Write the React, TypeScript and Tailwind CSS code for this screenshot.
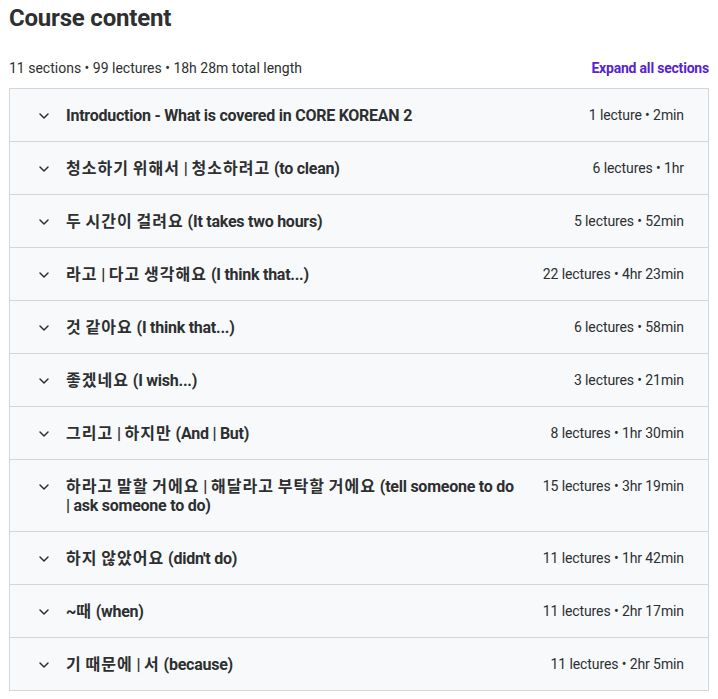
import { ChevronDown } from "lucide-react";

type Section = {
  title: string;
  lectures: number;
  length: string;
};

const sections: Section[] = [
  { title: "Introduction - What is covered in CORE KOREAN 2", lectures: 1, length: "2min" },
  { title: "청소하기 위해서 | 청소하려고 (to clean)", lectures: 6, length: "1hr" },
  { title: "두 시간이 걸려요 (It takes two hours)", lectures: 5, length: "52min" },
  { title: "라고 | 다고 생각해요 (I think that...)", lectures: 22, length: "4hr 23min" },
  { title: "것 같아요 (I think that...)", lectures: 6, length: "58min" },
  { title: "좋겠네요 (I wish...)", lectures: 3, length: "21min" },
  { title: "그리고 | 하지만 (And | But)", lectures: 8, length: "1hr 30min" },
  {
    title: "하라고 말할 거에요 | 해달라고 부탁할 거에요 (tell someone to do | ask someone to do)",
    lectures: 15,
    length: "3hr 19min",
  },
  { title: "하지 않았어요 (didn't do)", lectures: 11, length: "1hr 42min" },
  { title: "~때 (when)", lectures: 11, length: "2hr 17min" },
  { title: "기 때문에 | 서 (because)", lectures: 11, length: "2hr 5min" },
];

// hangul runs render a touch wider than the latin text around them
function Title({ text }: { text: string }) {
  const parts = text.split(/([\uAC00-\uD7A3\u3131-\u318E]+)/);
  return (
    <>
      {parts.map((p, i) =>
        i % 2 === 1 ? (
          <span key={i} className="tracking-[1.05px]">
            {p}
          </span>
        ) : (
          <span key={i}>{p}</span>
        )
      )}
    </>
  );
}

export default function App() {
  return (
    <div
      className="min-h-screen bg-white px-[9px] pt-[4px] text-[#2d2f31]"
      style={{ fontFamily: 'Roboto, "Noto Sans CJK KR", sans-serif' }}
    >
      <h2 className="text-[24px] font-bold leading-[29px] tracking-[-0.2px]">Course content</h2>
      <div className="mt-[25px] mb-[10px] flex items-center justify-between text-sm leading-5">
        <span>11 sections • 99 lectures • 18h 28m total length</span>
        <button type="button" className="text-sm font-bold tracking-[-0.2px] text-[#5624d0]">
          Expand all sections
        </button>
      </div>
      <div className="border border-b-0 border-[#d1d7dc]">
        {sections.map((s) => (
          <button
            key={s.title}
            type="button"
            className="flex w-full items-start border-b border-[#d1d7dc] bg-[#f7f9fa] pb-4 pl-6 pr-6 pt-[17px] text-left"
          >
            <span className="flex h-[19px] w-5 shrink-0 items-center justify-center">
              <ChevronDown className="h-4 w-4" strokeWidth={2.2} />
            </span>
            <span className="ml-3 flex-1 text-base font-bold leading-[19px] tracking-[-0.25px]">
              <Title text={s.title} />
            </span>
            <span className="ml-6 shrink-0 text-sm leading-[19px] tracking-[-0.1px]">
              {s.lectures} {s.lectures === 1 ? "lecture" : "lectures"} • {s.length}
            </span>
          </button>
        ))}
      </div>
    </div>
  );
}
